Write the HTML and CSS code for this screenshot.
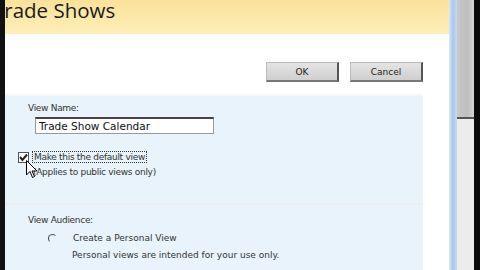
FILE: index.html
```html
<!DOCTYPE html>
<html lang="en">
<head>
    <meta charset="UTF-8">
    <title>Trade Shows - Edit View</title>
    <link rel="stylesheet" href="styles.css">
</head>
<body>
    <div class="frame">
        <div class="edge-left"></div>
        <div class="main">
            <div class="title-bar">
                <h1 class="title">Trade Shows</h1>
            </div>
            <div class="toolbar">
                <button class="btn">OK</button>
                <button class="btn">Cancel</button>
            </div>
            <div class="panel">
                <div class="section">
                    <div class="label">View Name:</div>
                    <input class="name-input" type="text" value="Trade Show Calendar">
                    <div class="check-row">
                        <span class="checkbox">
                            <svg width="9" height="9" viewBox="0 0 9 9"><path d="M1 4 L3.5 7 L8 1.5" fill="none" stroke="#222" stroke-width="2"/></svg>
                        </span>
                        <span class="check-text">Make this the default view</span>
                    </div>
                    <div class="note">(Applies to public views only)</div>
                    <svg class="cursor" width="12" height="19" viewBox="0 0 12 19"><path d="M0.5 0.5 L0.5 15 L4 11.5 L6.5 17.5 L8.5 16.5 L6 11 L11 11 Z" fill="#fff" stroke="#000" stroke-width="1"/></svg>
                </div>
                <div class="section audience">
                    <div class="label">View Audience:</div>
                    <div class="radio-row">
                        <span class="radio"></span>
                        <span>Create a Personal View</span>
                    </div>
                    <div class="radio-note">Personal views are intended for your use only.</div>
                </div>
            </div>
        </div>
        <div class="edge-blue"></div>
        <div class="scrollbar">
            <div class="thumb"></div>
        </div>
        <div class="edge-right"></div>
    </div>
</body>
</html>
```
FILE: styles.css
```css
body {
    margin: 0;
    width: 480px;
    height: 270px;
    overflow: hidden;
    font-family: "DejaVu Sans", sans-serif;
    background-color: #fff;
}
.frame {
    display: flex;
    height: 270px;
}
.edge-left {
    width: 5px;
    background-color: #111;
}
.edge-right {
    width: 6px;
    background-color: #0a0a0a;
}
.edge-blue {
    width: 8px;
    background: linear-gradient(to right, #d8e6f8, #a9c6ee 50%, #c7daf4);
}
.scrollbar {
    width: 17px;
    background-color: #ececec;
}
.thumb {
    height: 117px;
    background: linear-gradient(to right, #c9c9c9, #bdbdbd 60%, #d6d6d6);
    border-bottom: 2px solid #555;
}
.main {
    flex: 1;
    position: relative;
    overflow: hidden;
}
.title-bar {
    height: 34px;
    background: linear-gradient(to bottom, #fae29a, #fdeeb9);
    overflow: hidden;
}
.title {
    margin: 0;
    font-family: "Open Sans", sans-serif;
    font-weight: normal;
    font-size: 20.5px;
    line-height: 22px;
    color: #1a1a1a;
    text-indent: -12px;
    margin-top: -1px;
}
.toolbar {
    display: flex;
    justify-content: flex-end;
    gap: 11px;
    padding: 28px 26px 12px 0;
}
.btn {
    width: 73px;
    height: 20px;
    padding: 0;
    font-family: "DejaVu Sans", sans-serif;
    font-size: 9px;
    color: #222;
    background: linear-gradient(to bottom, #e4e4e4, #cfcfcf);
    border: 1px solid #bbb;
    border-right: 2px solid #555;
    border-bottom: 2px solid #777;
}
.panel {
    width: 418px;
    background-color: #e9f3fb;
    border-top: 2px solid #f6f6f6;
}
.section {
    position: relative;
    padding: 7px 0 26px 23px;
    border-bottom: 2px solid #f1ecf3;
    font-size: 9px;
    color: #333;
}
.section.audience {
    padding-top: 10px;
    border-bottom: none;
}
.label {
    height: 13px;
    letter-spacing: -0.3px;
}
.name-input {
    display: block;
    margin: 1px 0 0 7px;
    width: 171px;
    height: 12px;
    padding: 1px 3px;
    font-family: "DejaVu Sans", sans-serif;
    font-size: 10.5px;
    color: #111;
    background-color: #fff;
    border: 1px solid #999;
    border-top: 2px solid #444;
}
.check-row {
    display: flex;
    align-items: center;
    gap: 3px;
    margin: 17px 0 0 -10px;
}
.checkbox {
    width: 9px;
    height: 9px;
    background-color: #fff;
    border: 1px solid #555;
    display: flex;
}
.check-text {
    border: 1px dotted #333;
    padding: 0 1px;
    letter-spacing: -0.3px;
}
.note {
    margin: 4px 0 0 5px;
    letter-spacing: -0.3px;
}
.cursor {
    position: absolute;
    left: 21px;
    top: 64px;
}
.radio-row {
    display: flex;
    align-items: center;
    gap: 16px;
    margin: 5px 0 0 20px;
}
.radio {
    width: 7px;
    height: 7px;
    border-radius: 50%;
    border: 1px solid transparent;
    border-left-color: #444;
    border-top-color: #555;
}
.radio-note {
    margin: 7px 0 0 44px;
}
```
